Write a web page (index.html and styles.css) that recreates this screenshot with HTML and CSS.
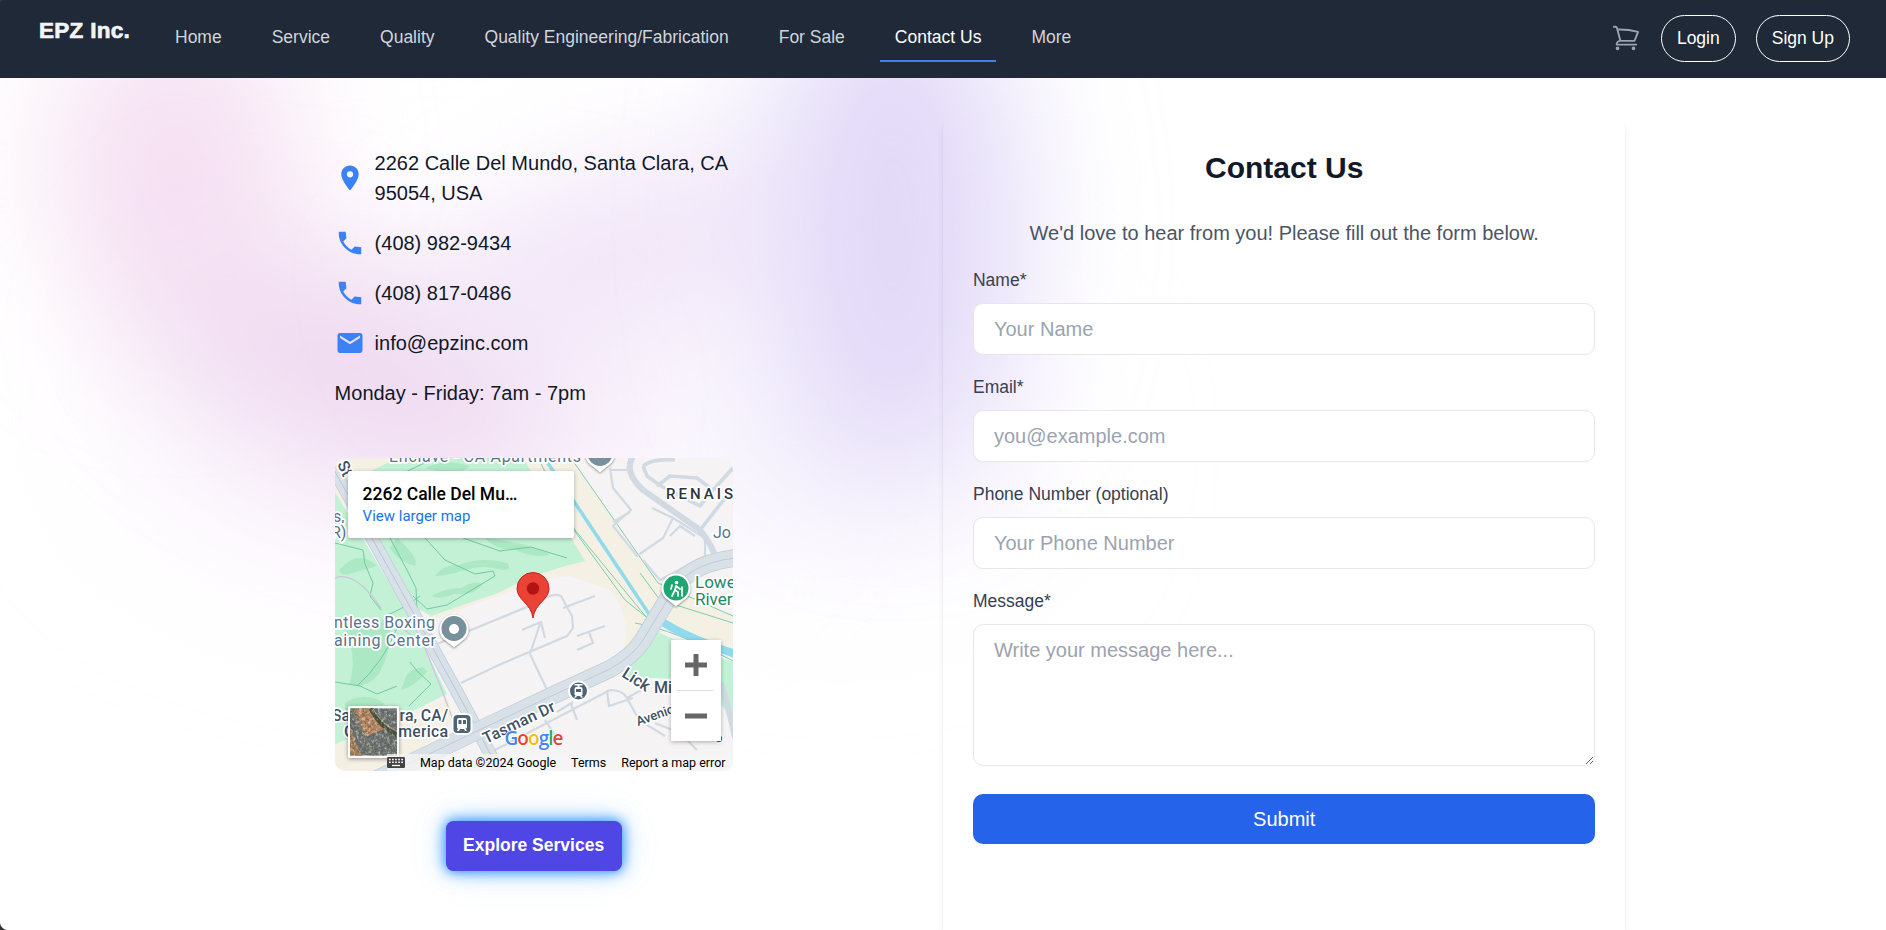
FILE: index.html
```html
<!DOCTYPE html>
<html lang="en">
<head>
<meta charset="utf-8">
<title>EPZ Inc. - Contact Us</title>
<link rel="stylesheet" href="styles.css">
</head>
<body>
<svg class="backdrop" viewBox="0 0 1886 930" aria-hidden="true">
  <defs>
    <filter id="soft" x="-100%" y="-100%" width="300%" height="300%"><feGaussianBlur stdDeviation="64"/></filter>
    <filter id="wide" x="-100%" y="-100%" width="300%" height="300%"><feGaussianBlur stdDeviation="85"/></filter>
  </defs>
  <ellipse cx="430" cy="420" rx="310" ry="140" fill="#f9f2fc" filter="url(#wide)"/>
  <ellipse cx="840" cy="450" rx="190" ry="110" fill="#f7f3fd" filter="url(#wide)"/>
  <ellipse cx="175" cy="170" rx="120" ry="165" fill="#f5dff2" filter="url(#soft)"/>
  <ellipse cx="355" cy="368" rx="215" ry="95" fill="#efd9f0" filter="url(#soft)" transform="rotate(20 355 368)"/>
  <ellipse cx="620" cy="255" rx="190" ry="80" fill="#f0e3f7" filter="url(#soft)" transform="rotate(-20 620 255)"/>
  <ellipse cx="893" cy="225" rx="130" ry="255" fill="#e2d9f8" filter="url(#soft)"/>
</svg>

<header class="navbar">
  <a class="logo">EPZ Inc.</a>
  <nav class="links">
    <a class="link">Home</a>
    <a class="link">Service</a>
    <a class="link">Quality</a>
    <a class="link">Quality Engineering/Fabrication</a>
    <a class="link">For Sale</a>
    <a class="link active">Contact Us</a>
    <a class="link">More</a>
  </nav>
  <div class="account">
    <svg class="cart" viewBox="0 0 24 24" fill="none" stroke="currentColor" stroke-width="1.5" stroke-linecap="round" stroke-linejoin="round"><path d="M2.25 3h1.386c.51 0 .955.343 1.087.835l.383 1.437M7.5 14.25a3 3 0 0 0-3 3h15.75m-12.75-3h11.218c1.121-2.3 2.1-4.684 2.924-7.138a60.114 60.114 0 0 0-16.536-1.84M7.5 14.25 5.106 5.272M6 20.25a.75.75 0 1 1-1.5 0 .75.75 0 0 1 1.5 0Zm12.75 0a.75.75 0 1 1-1.5 0 .75.75 0 0 1 1.5 0Z"/></svg>
    <a class="pill">Login</a>
    <a class="pill">Sign Up</a>
  </div>
</header>

<main class="page">
  <section class="info">
    <div class="row">
      <svg class="icon" viewBox="0 0 24 24"><path d="M12 2C8.13 2 5 5.13 5 9c0 5.25 7 13 7 13s7-7.75 7-13c0-3.87-3.13-7-7-7zm0 9.5a2.5 2.5 0 0 1 0-5 2.5 2.5 0 0 1 0 5z"/></svg>
      <span>2262 Calle Del Mundo, Santa Clara, CA 95054, USA</span>
    </div>
    <div class="row">
      <svg class="icon" viewBox="0 0 24 24"><path d="m21 15.46-5.27-.61-2.52 2.52a15.045 15.045 0 0 1-6.59-6.59l2.53-2.53L8.54 3H3.03C2.45 13.18 10.82 21.55 21 20.97v-5.51z"/></svg>
      <span>(408) 982-9434</span>
    </div>
    <div class="row">
      <svg class="icon" viewBox="0 0 24 24"><path d="m21 15.46-5.27-.61-2.52 2.52a15.045 15.045 0 0 1-6.59-6.59l2.53-2.53L8.54 3H3.03C2.45 13.18 10.82 21.55 21 20.97v-5.51z"/></svg>
      <span>(408) 817-0486</span>
    </div>
    <div class="row">
      <svg class="icon" viewBox="0 0 24 24"><path d="M20 4H4c-1.100 0-1.990.9-1.990 2L2 18c0 1.100.9 2 2 2h16c1.100 0 2-.9 2-2V6c0-1.100-.9-2-2-2zm0 4-8 5-8-5V6l8 5 8-5v2z"/></svg>
      <span>info@epzinc.com</span>
    </div>
    <div class="row"><span>Monday - Friday: 7am - 7pm</span></div>

    <div class="map">
      <svg class="map-canvas" viewBox="0 0 398 313">
        <rect width="398" height="313" fill="#f5f3f4"/>
        <!-- creek banks -->
        <path d="M180 0H236L282 68 323 125 398 158V202L330 172 300 200 285 202Q300 165 276 132L235 118 205 122 95 163 80 120 200 60Z" fill="#f5f0e4"/>
        <path d="M0 0H70L40 22 0 50ZM0 285 112 240 120 262 60 313H0Z" fill="#f5f0e4"/>
        <!-- parks -->
        <path d="M14 24 62 0H188L250 103Q205 113 163 135L96 158 81 150 20 48ZM0 34 74 158 112 236 60 262 0 286Z" fill="#c3f1d5"/>
        <path d="M323 174 360 191 398 204V262L366 222 288 219 300 201Z" fill="#c3f1d5"/>
        <g fill="#abe8c3">
          <path d="M62 80Q85 100 80 108 62 103 55 90ZM4 112Q24 90 42 108 28 112 14 116 6 118 4 112ZM100 118Q108 106 124 107 146 98 172 105 178 112 168 112 148 106 130 112 112 118 100 118ZM97 138Q110 130 126 130 140 122 148 126 140 138 120 136 104 142 97 138ZM8 166Q30 160 52 162 62 180 44 216 30 232 14 226 24 200 8 166ZM72 216Q88 204 92 214 78 230 66 232ZM90 10Q110 0 135 8 128 16 108 14ZM150 80Q190 84 215 96 205 102 180 92 160 92 150 80Z"/>
          <path d="M10 245Q30 232 50 246 34 262 10 260Z"/>
        </g>
        <g fill="none" stroke="#72c9a5" stroke-width="1">
          <path d="M0 85 28 92 30 106 38 125 35 138 46 152M55 80 72 112 81 130 82 152M90 80 110 102 140 116 158 113 160 118 140 130 112 147 92 151 78 138M128 80 165 93 196 89 232 100M50 158Q70 150 85 138M22 228Q48 205 62 170M75 204 82 213 96 226 74 248M0 224 25 228 42 236 62 228M62 18 100 0"/>
          <path d="M236 0 323 125 398 158M236 68 290 142 325 170M203 0 240 72 312 160M305 115 325 142 398 165M300 165Q340 172 398 203" stroke-width=".9"/>
        </g>
        <!-- creek -->
        <path d="M208 -2 240 45 318 162" fill="none" stroke="#90daee" stroke-width="3.500"/>
        <path d="M326 163Q348 178 400 196" fill="none" stroke="#90daee" stroke-width="8"/>
        <!-- local streets -->
        <g fill="none" stroke="#d1dae3" stroke-width="2.200">
          <path d="M102 186 204 144Q218 134 226 138L237 158 238 170 232 178 166 206 126 225M195 196 214 236M187 172 206 164 210 180M228 150 260 138M242 178 270 168M254 174 258 185 242 192M205 166 195 196"/>
          <path d="M275 10 278 30 296 52 278 68 302 98 328 80 338 60 317 50M278 64 295 54M338 60 370 80 370 98 325 122 308 102M335 78 345 68 360 78M275 12 292 12"/>
          <path d="M160 292 275 232Q288 232 292 240L304 262 330 278M292 240 310 230M236 246 242 262M222 254 238 244M272 232 274 248 298 240M320 265 345 275 362 292M210 262 222 280"/>
        </g>
        <g fill="none" stroke="#d1dae3" stroke-width="3.600">
          <path d="M308 8Q318 0 340 2M308 8 312 18 326 28 365 48 378 32 362 20 335 18 322 28M378 32 398 10M365 72 398 30"/>
        </g>
        <path d="M298 -2Q288 14 308 32L365 72Q378 88 382 104M386 225Q394 250 400 280" fill="none" stroke="#d1dae3" stroke-width="6"/>
        <!-- main roads -->
        <path d="M-2 10 38 82 84 165 122 234 166 316" fill="none" stroke="#c3ced8" stroke-width="13"/>
        <path d="M-2 10 38 82 84 165 122 234 166 316" fill="none" stroke="#d8e0e8" stroke-width="11.500"/>
        <path d="M-2 10 38 82 84 165 122 234 166 316" fill="none" stroke="#bdc5d1" stroke-width="1"/>
        <path d="M40 322 142 273 212 240 275 211Q298 198 308 182L334 139Q350 106 400 100" fill="none" stroke="#c3ced8" stroke-width="18"/>
        <path d="M40 322 142 273 212 240 275 211Q298 198 308 182L334 139Q350 106 400 100" fill="none" stroke="#d8e0e8" stroke-width="16.500"/>
        <path d="M40 322 142 273 212 240 275 211Q298 198 308 182L334 139Q350 106 400 100" fill="none" stroke="#c4c8d4" stroke-width="1"/>
        <path d="M60 163 90 190 108 235 118 262M0 120Q20 112 46 150" fill="none" stroke="#ccc8d8" stroke-width="1.400"/>
        <!-- labels -->
        <g class="label poi">
          <text x="54" y="4" textLength="192">Enclave - CA Apartments</text>
          <text x="-2" y="64">s,</text><text x="-4" y="80">R)</text>
          <text x="-1" y="170" textLength="101">ntless Boxing</text>
          <text x="-1" y="188" textLength="102">aining Center</text>
          <text x="378" y="80">Jo</text>
        </g>
        <g class="label dark">
          <text x="-3" y="263" textLength="116">Santa Clara, CA/</text>
          <text x="9" y="279" textLength="104">Great America</text>
          <text transform="translate(151 286) rotate(-25.500)" textLength="78">Tasman Dr</text>
          <text transform="translate(286 218) rotate(33)">Lick</text>
          <text x="319" y="235">Mi</text>
          <text class="small" transform="translate(303 268) rotate(-20)">Avenic</text>
          <text class="small" x="380" y="284">o</text>
          <text transform="translate(2 6) rotate(65)">St</text>
        </g>
        <text class="label district" x="331" y="41" textLength="67">RENAIS</text>
        <g class="label trail"><text x="360" y="130">Lowe</text><text x="360" y="147">River</text></g>
        <!-- place markers -->
        <g class="marker" fill="#fff">
          <path d="M119 156.500a14.500 14.500 0 0 1 10.500 24.500Q123 186 119 189.500 115 186 108.500 181a14.500 14.500 0 0 1 10.500-24.500z"/>
          <path d="M265-18.500a14.500 14.500 0 0 1 10.500 24.500Q269 11 265 14.500 261 11 254.500 6a14.500 14.500 0 0 1 10.500-24.500z"/>
          <path d="M341 115.500a14.500 14.500 0 0 1 10.500 24.500Q345 145 341 148.500 337 145 330.500 140a14.500 14.500 0 0 1 10.500-24.500z"/>
        </g>
        <circle cx="119" cy="170.500" r="12.500" fill="#78909c"/>
        <circle cx="265" cy="-4.500" r="12.500" fill="#78909c"/>
        <circle cx="341" cy="130" r="12.500" fill="#1ea672"/>
        <g fill="#4e6577" stroke="#fff" stroke-width="2">
          <rect x="117.500" y="256" width="19" height="20" rx="5"/>
          <circle cx="243.500" cy="233" r="9.500"/>
        </g>
        <circle cx="119" cy="171" r="5" fill="#fff"/>
        <g fill="none" stroke="#fff" stroke-width="1.700" stroke-linecap="round"><circle cx="341.500" cy="124.500" r="1" fill="#fff"/><path d="M341 128 340 132 343 134 343 138M340 132 337 138M341 128 345 131M347 129V138M337 127 336 131"/></g>
        <path fill="#fff" fill-rule="evenodd" d="M122 262q0-2 2-2h6q2 0 2 2v7q0 1.500-1.500 1.500L132 273h-2l-1-2h-4l-1 2h-2l1-2.500q-1 0-1-1.500zm1.500 0v4h3v-4zm4.500 0v4h3v-4zM239.500 226h8v1.500h-3V229h1q2 0 2 2v5q0 1-1 1.500l1.500 2h-2l-1-1.500h-3l-1 1.500h-2l1.500-2q-1-.5-1-1.500v-5q0-2 2-2h1v-1.500h-3zM241 231v3h5v-3z"/>
        <path d="M198 160C196 145 182 142 182 130.500a16 16 0 0 1 32 0C214 142 200 145 198 160Z" fill="#ea4335" stroke="#c5221f" stroke-width="1"/>
        <circle cx="198" cy="130.500" r="6.200" fill="#b31412"/>
        <text class="google" x="169.500" y="287" textLength="59"><tspan fill="#4285f4">G</tspan><tspan fill="#ea4335">o</tspan><tspan fill="#fbbc04">o</tspan><tspan fill="#4285f4">g</tspan><tspan fill="#34a853">l</tspan><tspan fill="#ea4335">e</tspan></text>
      </svg>
      <div class="place">
        <div class="place-name">2262 Calle Del Mu…</div>
        <a class="place-link">View larger map</a>
      </div>
      <svg class="satellite" viewBox="0 0 47 47">
        <defs><filter id="grain" x="0" y="0" width="100%" height="100%"><feTurbulence type="fractalNoise" baseFrequency=".32" numOctaves="3" seed="4"/><feColorMatrix values="0 0 0 0 .9  0 0 0 0 .86  0 0 0 0 .8  2.500 0 0 0 -1.150"/></filter>
        <filter id="grit" x="0" y="0" width="100%" height="100%"><feTurbulence type="fractalNoise" baseFrequency=".4" numOctaves="3" seed="9"/><feColorMatrix values="0 0 0 0 .1  0 0 0 0 .11  0 0 0 0 .09  3 0 0 0 -1.300"/></filter></defs>
        <rect width="47" height="47" fill="#686e6e"/>
        <path d="M4 0H22L36 20 16 28Z" fill="#b98258"/><path d="M0 20 12 47H0Z" fill="#a9784e"/>
        <path d="M0 0 14 27 24 47" fill="none" stroke="#7c7a6c" stroke-width="3"/>
        <path d="M21 0Q30 18 47 26" fill="none" stroke="#474b36" stroke-width="5"/>
        <path d="M23 0Q32 16 47 23" fill="none" stroke="#a79b7c" stroke-width="1.300"/>
        <rect width="47" height="47" filter="url(#grit)" opacity=".7"/>
        <rect width="47" height="47" filter="url(#grain)" opacity=".6"/>
      </svg>
      <div class="zoom">
        <svg class="zoom-icon" viewBox="0 0 22 22"><path d="M8.500 0h5v8.500H22v5h-8.500V22h-5v-8.500H0v-5h8.500z"/></svg>
        <span class="zoom-line"></span>
        <svg class="zoom-icon" viewBox="0 0 22 22"><path d="M0 8.500h22v5H0z"/></svg>
      </div>
      <div class="credits">
        <svg class="keyboard" viewBox="0 0 18 11"><rect width="18" height="11" rx="1.200" fill="#444"/><path d="M2 2.500h14M2 5.300h14" stroke="#fff" stroke-width="1.500" stroke-dasharray="1.700 1.370"/><path d="M5 8.500h8" stroke="#fff" stroke-width="1.300"/></svg>
        <span>Map data ©2024 Google</span>
        <span>Terms</span>
        <span>Report a map error</span>
      </div>
    </div>

    <a class="explore">Explore Services</a>
  </section>

  <section class="card">
    <h1 class="title">Contact Us</h1>
    <p class="intro">We'd love to hear from you! Please fill out the form below.</p>
    <form class="form">
      <div class="field"><label class="label-text" for="name">Name*</label><input class="input" id="name" placeholder="Your Name"></div>
      <div class="field"><label class="label-text" for="email">Email*</label><input class="input" id="email" placeholder="you@example.com"></div>
      <div class="field"><label class="label-text" for="phone">Phone Number (optional)</label><input class="input" id="phone" placeholder="Your Phone Number"></div>
      <div class="field message"><label class="label-text" for="message">Message*</label><textarea class="input area" id="message" placeholder="Write your message here..."></textarea></div>
      <button class="submit" type="button">Submit</button>
    </form>
  </section>
</main>
</body>
</html>
```
FILE: styles.css
```css
* { box-sizing: border-box; }

body {
  margin: 0;
  height: 100vh;
  overflow: hidden;
  position: relative;
  background: #fff;
  color: #111827;
  font: 20px/30px "Liberation Sans", Arial, sans-serif;
}

body::before,
body::after {
  content: "";
  position: absolute;
  left: 0;
  z-index: 3;
  width: 8px;
  height: 8px;
}
body::before { top: 0; width: 4px; height: 4px; background: radial-gradient(circle at 100% 100%, transparent 3.5px, #3d3d38 4.500px); }
body::after { bottom: 0; background: radial-gradient(circle at 100% 0, transparent 7.500px, #333 8.500px); }

.backdrop {
  position: absolute;
  inset: 0;
  width: 1886px;
  height: 930px;
  z-index: -1;
}

.navbar {
  display: flex;
  align-items: flex-start;
  height: 78px;
  padding: 0 36px 0 39px;
  background: #1f2937;
}

.logo {
  width: 121px;
  padding-top: 16px;
  color: #f3f4f6;
  font-size: 22.5px;
  font-weight: 700;
  letter-spacing: .3px;
  -webkit-text-stroke: .7px #f3f4f6;
}

.links { display: flex; gap: 20px; }

.link {
  height: 62px;
  padding: 25px 15px 0;
  color: #d1d5db;
  font-size: 17.5px;
  line-height: 25px;
}
.link.active { color: #fff; border-bottom: 2px solid #3b82f6; }

.account {
  display: flex;
  align-items: center;
  gap: 20px;
  margin-left: auto;
  padding-top: 15px;
}
.cart { width: 30px; height: 30px; margin-bottom: 2px; color: #9ca3af; }

.pill {
  padding: 10px 15px;
  border: 1px solid #fff;
  border-radius: 24px;
  color: #fff;
  font-size: 17.5px;
  line-height: 25px;
}

.page {
  display: flex;
  align-items: flex-start;
  gap: 210.4px;
  height: calc(100vh - 78px);
  padding: 40px 0 0 334.6px;
}

.info {
  display: flex;
  flex-direction: column;
  gap: 20px;
  width: 398px;
  padding-top: 30px;
}
.row { display: flex; align-items: center; gap: 10px; }
.icon { flex: none; width: 30px; height: 30px; fill: #3b82f6; }

.map {
  position: relative;
  height: 313px;
  margin-top: 30px;
  overflow: hidden;
  border-radius: 10px;
  font-family: Roboto, sans-serif;
}
.map-canvas { display: block; width: 398px; height: 313px; }

.label {
  font: 16px Roboto, sans-serif;
  paint-order: stroke;
  stroke: #fff;
  stroke-width: 3.5px;
  stroke-linejoin: round;
}
.poi { fill: #56748a; }
.dark { fill: #3d5163; font-weight: 500; }
.dark .small { font-size: 13px; }
.trail { fill: #198a63; font-size: 17px; }
.district { fill: #2f353b; font-size: 15px; font-weight: 500; }
.marker { filter: drop-shadow(0 1px 1px rgba(0, 0, 0, .4)); }
.google { font: 19px "Open Sans", sans-serif; font-weight: 600; paint-order: stroke; stroke: #fff; stroke-width: 1.500px; }

.place {
  position: absolute;
  left: 13px;
  top: 13px;
  width: 226px;
  height: 67px;
  padding: 12px 15px;
  background: #fff;
  border-radius: 2px;
  box-shadow: 0 1px 4px rgba(0, 0, 0, .3);
}
.place-name { color: #000; font-size: 17.5px; font-weight: 500; line-height: 23px; white-space: nowrap; }
.place-link { display: block; color: #1a73e8; font-size: 15px; line-height: 20px; }

.satellite {
  position: absolute;
  left: 13px;
  top: 248px;
  width: 51px;
  height: 52px;
  border: 2px solid #fff;
  border-radius: 2px;
  box-shadow: 0 1px 4px rgba(0, 0, 0, .4);
}

.zoom {
  position: absolute;
  left: 336px;
  top: 182px;
  display: flex;
  flex-direction: column;
  align-items: center;
  justify-content: space-between;
  width: 50px;
  height: 101px;
  padding: 14px 0;
  background: #fff;
  box-shadow: 0 1px 4px rgba(0, 0, 0, .3);
}
.zoom-icon { width: 22px; height: 22px; fill: #666; }
.zoom-line { width: 37px; height: 1px; background: #e0e0e0; }

.credits {
  position: absolute;
  right: 0;
  bottom: 0;
  display: flex;
  align-items: center;
  gap: 15px;
  height: 17px;
  padding-right: 7px;
  background: rgba(245, 245, 245, .75);
  color: #000;
  font-size: 12.5px;
  line-height: 17px;
  white-space: nowrap;
}
.keyboard { width: 18px; height: 11px; }

.explore {
  align-self: center;
  margin-top: 30px;
  padding: 12px 17.5px 13px;
  border-radius: 7.500px;
  background: #4f46e5;
  box-shadow: 0 0 12px #2b90ff, 0 0 20px rgba(59, 156, 255, .6), 0 0 40px rgba(59, 156, 255, .14);
  color: #fff;
  font-size: 17.5px;
  font-weight: 700;
  line-height: 25px;
}

.card {
  width: 682.500px;
  height: 100%;
  padding: 30px;
  border-radius: 10px 10px 0 0;
  box-shadow: 0 4px 6px -1px rgba(0, 0, 0, .1), 0 2px 4px -2px rgba(0, 0, 0, .1);
}
.title { margin: 0 0 30px; font-size: 30px; line-height: 40px; text-align: center; }
.intro { margin: 0 0 20px; color: #4b5563; text-align: center; }

.form { display: flex; flex-direction: column; gap: 20px; }
.field { display: flex; flex-direction: column; gap: 10px; }
.message { padding-bottom: 8px; }
.label-text { color: #374151; font-size: 17.5px; line-height: 25px; }

.input {
  width: 100%;
  height: 52px;
  padding: 10px 20px;
  border: 1px solid #e5e7eb;
  border-radius: 10px;
  background: #fff;
  font: inherit;
}
.input::placeholder { color: #9ca3af; }
.area { display: block; height: 142px; resize: vertical; }

.submit {
  height: 50px;
  padding: 0;
  border: 0;
  border-radius: 10px;
  background: #2563eb;
  color: #fff;
  font: inherit;
}
```
